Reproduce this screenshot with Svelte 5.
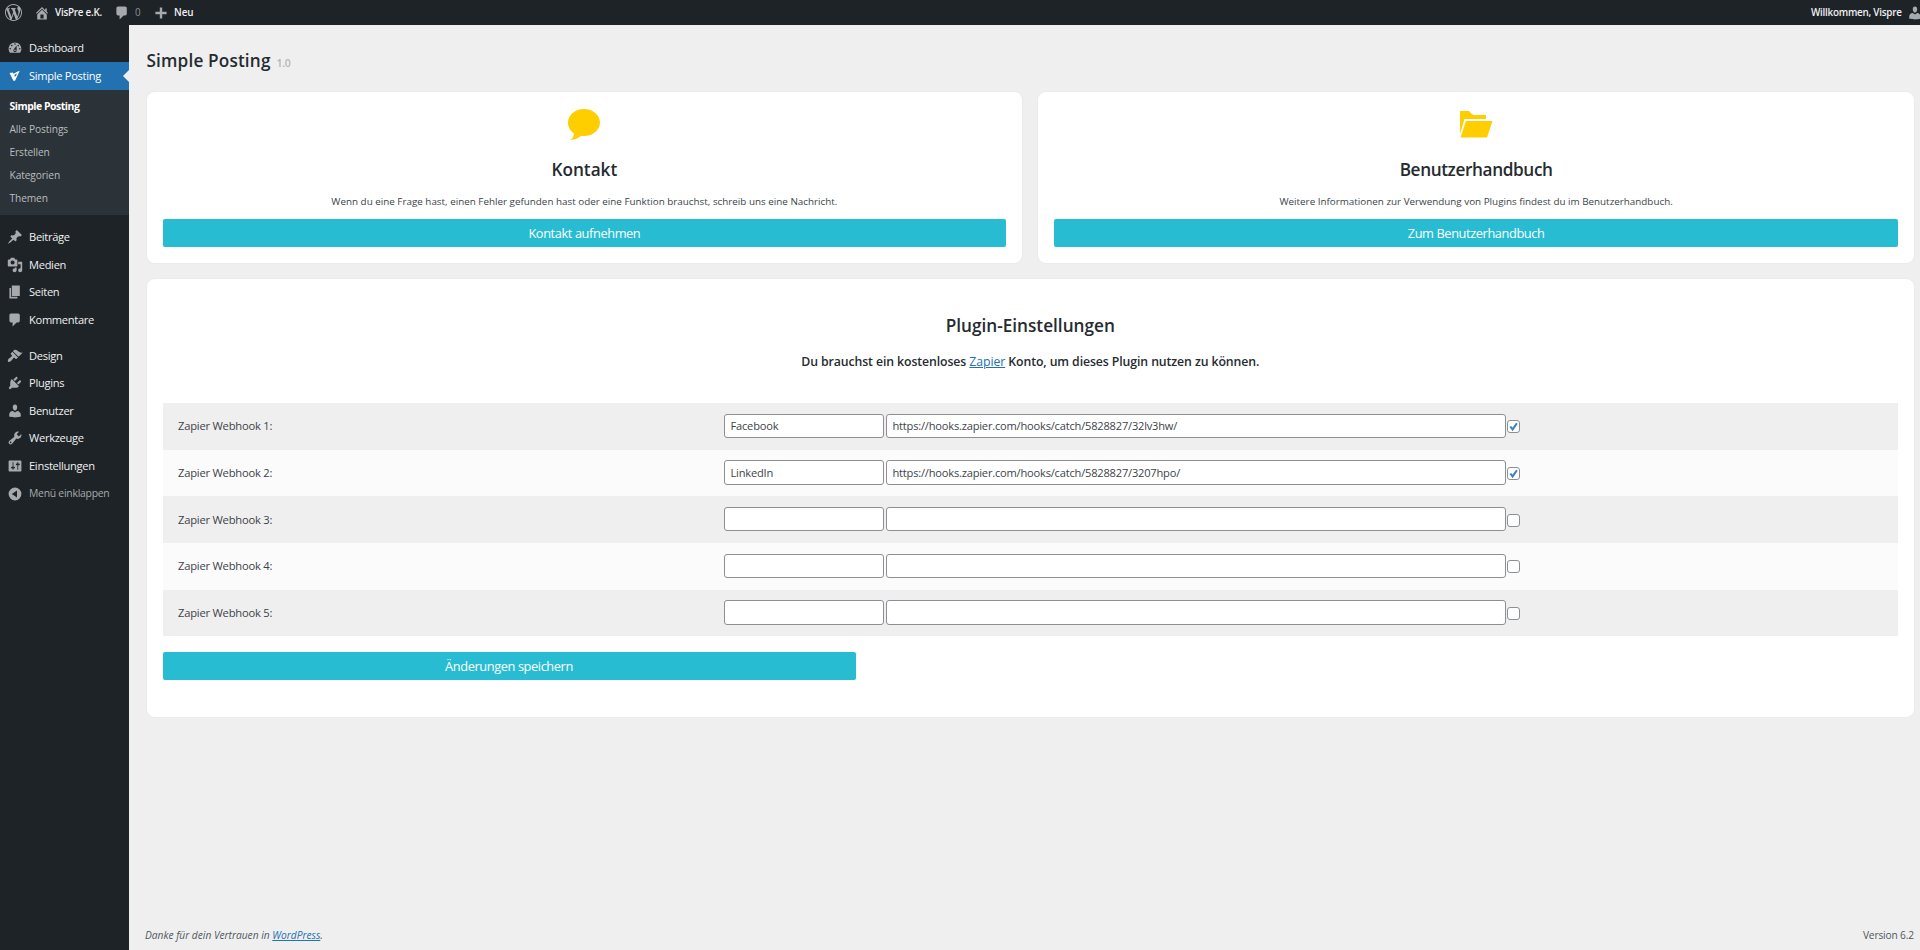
<script lang="ts">
  const icons: Record<string, string> = {
    wordpress: 'M20 10c0-5.51-4.49-10-10-10C4.48 0 0 4.49 0 10c0 5.52 4.48 10 10 10 5.51 0 10-4.48 10-10zM7.78 15.37L4.37 6.22c.55-.02 1.17-.08 1.17-.08.5-.06.44-1.13-.06-1.11 0 0-1.45.11-2.37.11-.18 0-.37 0-.58-.01C4.12 2.69 6.87 1.11 10 1.11c2.33 0 4.45.87 6.05 2.34-.68-.11-1.65.39-1.65 1.58 0 .74.45 1.36.9 2.1.35.61.55 1.36.55 2.46 0 1.49-1.4 5-1.4 5l-3.03-8.37c.54-.02.82-.17.82-.17.5-.05.44-1.25-.06-1.22 0 0-1.44.12-2.38.12-.87 0-2.33-.12-2.33-.12-.5-.03-.56 1.2-.06 1.22l.92.08 1.26 3.41zM17.41 10c.24-.64.74-1.87.43-4.25.7 1.29 1.05 2.71 1.05 4.25 0 3.29-1.73 6.24-4.4 7.78.97-2.59 1.94-5.2 2.92-7.78zM6.1 18.09C3.12 16.65 1.11 13.53 1.11 10c0-1.3.23-2.48.72-3.59C3.25 10.3 4.67 14.2 6.1 18.09zm4.03-6.63l2.58 6.98c-.86.29-1.76.45-2.71.45-.79 0-1.57-.11-2.29-.33.81-2.38 1.62-4.74 2.42-7.1z',
    home: 'M16 8.5l1.53 1.53-1.06 1.06L10 4.6l-6.47 6.49-1.06-1.06L10 2.5l4 4v-2h2v4zm-6-2.46l6 5.99V18H4v-5.97zM12 17v-5H8v5h4z',
    comments: 'M5 2h9c1.1 0 2 .9 2 2v7c0 1.1-.9 2-2 2h-2l-5 5v-5H5c-1.1 0-2-.9-2-2V4c0-1.1.9-2 2-2z',
    plus: 'M17 8.5v3h-5.5V17h-3v-5.5H3v-3h5.5V3h3v5.5z',
    dashboard: 'M3.76 16h12.48c1.1-1.37 1.76-3.11 1.76-5 0-4.42-3.58-8-8-8s-8 3.58-8 8c0 1.89.66 3.63 1.76 5zM10 4c.55 0 1 .45 1 1s-.45 1-1 1-1-.45-1-1 .45-1 1-1zM6 6c.55 0 1 .45 1 1s-.45 1-1 1-1-.45-1-1 .45-1 1-1zm8 0c.55 0 1 .45 1 1s-.45 1-1 1-1-.45-1-1 .45-1 1-1zm-5.37 5.55L12 7v6c0 1.1-.9 2-2 2s-2-.9-2-2c0-.57.24-1.08.63-1.45zM4 10c.55 0 1 .45 1 1s-.45 1-1 1-1-.45-1-1 .45-1 1-1zm12 0c.55 0 1 .45 1 1s-.45 1-1 1-1-.45-1-1 .45-1 1-1zm-5 3c0-.55-.45-1-1-1s-1 .45-1 1 .45 1 1 1 1-.45 1-1z',
    vispre: 'M1 5.500L6.500 4.500 8.500 7 15 3 19.500 1.500 11 19.500 8 19.500zM10 8.500v3.500l2.500-.5 2-5z',
    post: 'M10.44 3.02l1.82-1.82 6.36 6.35-1.83 1.82c-1.05-.68-2.48-.57-3.41.36l-.75.75c-.92.93-1.04 2.35-.35 3.41l-1.83 1.82-2.41-2.41-2.8 2.79c-.42.42-3.38 2.71-3.8 2.29s1.86-3.39 2.28-3.81l2.79-2.79L4.1 9.36l1.83-1.82c1.05.69 2.48.57 3.4-.36l.75-.75c.93-.92 1.05-2.35.36-3.41z',
    media: 'M13 11V4c0-.55-.45-1-1-1h-1.67L9 1H5L3.67 3H2c-.55 0-1 .45-1 1v7c0 .55.45 1 1 1h10c.55 0 1-.45 1-1zM7 4.5c1.38 0 2.5 1.12 2.5 2.5S8.38 9.5 7 9.5 4.5 8.38 4.5 7 5.62 4.5 7 4.5zM14 6h5v10.5c0 1.38-1.12 2.5-2.5 2.5S14 17.88 14 16.5s1.12-2.5 2.5-2.5c.17 0 .34.02.5.05V9h-3V6zm-4 8.05V13h2v3.5c0 1.38-1.12 2.5-2.5 2.5S7 17.88 7 16.5 8.12 14 9.5 14c.17 0 .34.02.5.05z',
    page: 'M6 15V2h10v13H6zm-1 1h8v2H3V5h2v11z',
    appearance: 'M14.48 11.06L7.41 3.99l1.5-1.5c.5-.56 2.3-.47 3.51.32 1.21.8 1.43 1.28 2.91 2.1 1.18.64 2.45 1.26 4.45.85zm-.71.71L6.7 4.7 4.93 6.47c-.39.39-.39 1.02 0 1.41l1.06 1.06c.39.39.39 1.03 0 1.42-.6.6-1.43 1.11-2.21 1.69-.35.26-.7.53-1.01.84C1.43 14.23.4 16.08 1.4 17.07c.99 1 2.84-.03 4.18-1.36.31-.31.58-.66.85-1.02.57-.78 1.08-1.61 1.69-2.21.39-.39 1.02-.39 1.41 0l1.06 1.06c.39.39 1.02.39 1.41 0z',
    plugins: 'M13.11 4.36L9.87 7.6 8 5.73l3.24-3.24c.35-.34 1.05-.2 1.56.32.52.51.66 1.21.31 1.55zm-8 1.77l.91-1.12 9.01 9.01-1.19.84c-.71.71-2.63 1.16-3.82 1.16H6.14L4.9 17.26c-.59.59-1.54.59-2.12 0-.59-.58-.59-1.53 0-2.12l1.24-1.24v-3.88c0-1.13.4-3.19 1.09-3.89zm7.26 3.97l3.24-3.24c.34-.35 1.04-.21 1.55.31.52.51.66 1.21.31 1.55l-3.24 3.25z',
    users: 'M10 9.25c-2.27 0-2.73-3.44-2.73-3.44C7 4.02 7.82 2 9.97 2c2.16 0 2.98 2.02 2.71 3.81 0 0-.41 3.44-2.68 3.44zm0 2.57L12.72 10c2.39 0 4.52 2.33 4.52 4.53v2.49s-3.65 1.13-7.24 1.13c-3.65 0-7.24-1.13-7.24-1.13v-2.49c0-2.25 1.94-4.48 4.47-4.48z',
    tools: 'M16.68 9.77c-1.34 1.34-3.3 1.67-4.95.99l-5.41 6.52c-.99.99-2.59.99-3.58 0s-.99-2.59 0-3.57l6.52-5.42c-.68-1.65-.35-3.61.99-4.95 1.28-1.28 3.12-1.62 4.72-1.06l-2.89 2.89 2.82 2.82 2.86-2.87c.53 1.58.18 3.39-1.08 4.65zM3.81 16.21c.4.39 1.04.39 1.43 0 .4-.4.4-1.04 0-1.43-.39-.4-1.03-.4-1.43 0-.39.39-.39 1.03 0 1.43z',
    settings: 'M18 16V4c0-.55-.45-1-1-1H3c-.55 0-1 .45-1 1v12c0 .55.45 1 1 1h14c.55 0 1-.45 1-1zM8 11h1c.55 0 1 .45 1 1s-.45 1-1 1H8v1.5c0 .28-.22.5-.5.5s-.5-.22-.5-.5V13H6c-.55 0-1-.45-1-1s.45-1 1-1h1V5.5c0-.28.22-.5.5-.5s.5.22.5.5V11zm5-2h-1c-.55 0-1-.45-1-1s.45-1 1-1h1V5.5c0-.28.22-.5.5-.5s.5.22.5.5V7h1c.55 0 1 .45 1 1s-.45 1-1 1h-1v5.5c0 .28-.22.5-.5.5s-.5-.22-.5-.5V9z',
    collapse: 'M10 2a8 8 0 100 16 8 8 0 000-16zM12.5 5.5v9L6 10z'
  };

  const submenu = ['Simple Posting', 'Alle Postings', 'Erstellen', 'Kategorien', 'Themen'];

  const contentMenu = [
    { icon: 'post', label: 'Beiträge' },
    { icon: 'media', label: 'Medien' },
    { icon: 'page', label: 'Seiten' },
    { icon: 'comments', label: 'Kommentare' }
  ];

  const adminMenu = [
    { icon: 'appearance', label: 'Design' },
    { icon: 'plugins', label: 'Plugins' },
    { icon: 'users', label: 'Benutzer' },
    { icon: 'tools', label: 'Werkzeuge' },
    { icon: 'settings', label: 'Einstellungen' }
  ];

  let webhooks = $state([
    { name: 'Facebook', url: 'https://hooks.zapier.com/hooks/catch/5828827/32lv3hw/', active: true },
    { name: 'LinkedIn', url: 'https://hooks.zapier.com/hooks/catch/5828827/3207hpo/', active: true },
    { name: '', url: '', active: false },
    { name: '', url: '', active: false },
    { name: '', url: '', active: false }
  ]);
</script>

{#snippet icon(name: string)}
  <svg class="icon" viewBox="0 0 20 20" fill="currentColor" fill-rule="evenodd"><path d={icons[name]} /></svg>
{/snippet}

{#snippet menuItem(item: { icon: string; label: string })}
  <li class="menu-item">
    <span class="menu-icon">{@render icon(item.icon)}</span>
    <span class="menu-label">{item.label}</span>
  </li>
{/snippet}

<div class="page">
  <header class="adminbar">
    <span class="bar-logo">{@render icon('wordpress')}</span>
    <span class="bar-item site">{@render icon('home')}<span>VisPre e.K.</span></span>
    <span class="bar-item count">{@render icon('comments')}<span class="muted">0</span></span>
    <span class="bar-item new">{@render icon('plus')}<span>Neu</span></span>
    <span class="bar-item account"><span>Willkommen, Vispre</span>{@render icon('users')}</span>
  </header>

  <div class="layout">
    <nav class="sidebar">
      <ul>
        {@render menuItem({ icon: 'dashboard', label: 'Dashboard' })}
        <li class="menu-item active">
          <span class="menu-icon">{@render icon('vispre')}</span>
          <span class="menu-label">Simple Posting</span>
        </li>
      </ul>
      <ul class="submenu">
        {#each submenu as label, i}
          <li class:current={i === 0}><span>{label}</span></li>
        {/each}
      </ul>
      <ul class="group">
        {#each contentMenu as item}
          {@render menuItem(item)}
        {/each}
      </ul>
      <ul class="group">
        {#each adminMenu as item}
          {@render menuItem(item)}
        {/each}
        <li class="menu-item collapse">
          <span class="menu-icon">{@render icon('collapse')}</span>
          <span class="menu-label">Menü einklappen</span>
        </li>
      </ul>
    </nav>

    <main class="content">
      <h1><span>Simple Posting</span> <small>1.0</small></h1>

      <div class="cards">
        <section class="card info">
          <svg class="card-icon" viewBox="0 0 32 32" fill="#ffce00">
            <path d="M16 1c8.800 0 16 6 16 13.500S25 28 16 28c-1 0-2-.1-3-.3C9.800 30.500 6.500 32 2 31.800c2.500-1.300 4-3.300 4-6.300C2.300 23 0 19 0 14.500 0 7 7.200 1 16 1z" />
          </svg>
          <h2>Kontakt</h2>
          <p>Wenn du eine Frage hast, einen Fehler gefunden hast oder eine Funktion brauchst, schreib uns eine Nachricht.</p>
          <button type="button" class="btn"><span>Kontakt aufnehmen</span></button>
        </section>
        <section class="card info">
          <svg class="card-icon" viewBox="0 0 32 32" fill="#ffce00">
            <path d="M0 3h9l4 4h13v4H4.500L0 26z" />
            <path d="M6 13h26.500L27 29.500H.5z" />
          </svg>
          <h2 class="tight">Benutzerhandbuch</h2>
          <p>Weitere Informationen zur Verwendung von Plugins findest du im Benutzerhandbuch.</p>
          <button type="button" class="btn"><span>Zum Benutzerhandbuch</span></button>
        </section>
      </div>

      <section class="card settings">
        <h2>Plugin-Einstellungen</h2>
        <h3>Du brauchst ein kostenloses <a href="#zapier">Zapier</a> Konto, um dieses Plugin nutzen zu können.</h3>
        <div class="webhooks">
          {#each webhooks as hook, i}
            <div class="webhook">
              <label for="hook-{i}">Zapier Webhook {i + 1}:</label>
              <input id="hook-{i}" class="name" type="text" bind:value={hook.name} />
              <input class="url" type="text" bind:value={hook.url} />
              <button
                type="button"
                class="check"
                aria-label="Webhook {i + 1}"
                onclick={() => (hook.active = !hook.active)}
              >
                {#if hook.active}
                  <svg viewBox="0 0 12 12" fill="none" stroke="#3582c4" stroke-width="2.200"><path d="M2.500 6l2.500 3.200L9.700 2.500" /></svg>
                {/if}
              </button>
            </div>
          {/each}
        </div>
        <button type="button" class="btn save"><span>Änderungen speichern</span></button>
      </section>

      <footer>
        <em>Danke für dein Vertrauen in <a href="#wordpress">WordPress</a>.</em>
        <span>Version 6.2</span>
      </footer>
    </main>
  </div>
</div>

<style>
  :global(body) {
    background: #efefef;
    overflow: hidden;
  }

  .page {
    height: 950px;
    display: flex;
    flex-direction: column;
    overflow: hidden;
    font-family: "Open Sans", "Noto Sans", sans-serif;
    font-size: 10.5px;
    color: #3c434a;
  }

  ul {
    list-style: none;
    margin: 0;
    padding: 0;
  }

  a {
    color: #2271b1;
  }

  .icon {
    display: block;
    flex: none;
    width: 16px;
    height: 16px;
  }

  /* Admin bar */
  .adminbar {
    display: flex;
    flex: none;
    align-items: center;
    height: 25px;
    padding-left: 5px;
    background: #1d2327;
    color: #a7aaad;
    font-size: 9.900px;
    font-weight: 600;
  }

  .bar-logo .icon {
    width: 17px;
    height: 17px;
  }

  .bar-item {
    display: flex;
    align-items: center;
    gap: 5px;
  }

  .bar-item span {
    color: #f0f0f1;
    line-height: 14px;
    margin-bottom: 1px;
    white-space: nowrap;
    letter-spacing: -0.25px;
  }

  .bar-item .muted {
    color: #8b8f94;
    font-weight: 400;
  }

  .site {
    width: 80px;
    margin-left: 12px;
  }

  .count {
    width: 39px;
  }

  .new span {
    letter-spacing: -0.1px;
  }

  .account {
    width: 109px;
    margin-left: auto;
  }

  .layout {
    display: flex;
    flex: 1;
    min-height: 0;
  }

  /* Sidebar */
  .sidebar {
    flex: none;
    width: 128.5px;
    padding-top: 9.5px;
    box-sizing: border-box;
    background: #1d2327;
    color: #f0f0f1;
    font-size: 11.100px;
  }

  .menu-item {
    position: relative;
    display: flex;
    align-items: center;
    height: 27.500px;
    letter-spacing: -0.29px;
    white-space: nowrap;
  }

  .menu-label {
    margin-bottom: 1px;
  }

  .menu-icon {
    display: flex;
    justify-content: center;
    width: 29px;
    color: #a7aaad;
  }

  .active {
    background: #2271b1;
    color: #fff;
  }

  .active .menu-icon {
    color: #fff;
  }

  .active .icon {
    width: 11px;
    height: 13px;
  }

  .active::after {
    content: "";
    position: absolute;
    right: 0;
    top: 7.500px;
    border: 6.400px solid transparent;
    border-left: 0;
    border-right-color: #efefef;
  }

  .submenu {
    padding: 5.500px 0;
    background: #2c3338;
    color: #b9bcbf;
    font-size: 10.200px;
    letter-spacing: -0.1px;
  }

  .submenu li {
    display: flex;
    align-items: center;
    height: 22.900px;
    padding-left: 9.500px;
  }

  .submenu .current {
    color: #fff;
    font-size: 10.400px;
    font-weight: 700;
    letter-spacing: -0.45px;
  }

  .group {
    padding-top: 8.600px;
  }

  .collapse {
    color: #a7aaad;
    font-size: 10.400px;
    letter-spacing: -0.25px;
  }

  .collapse .menu-label {
    margin-bottom: 0;
  }

  .collapse .menu-icon {
    padding-top: 1px;
  }

  /* Content */
  .content {
    display: flex;
    flex: 1;
    flex-direction: column;
    min-width: 0;
    padding: 0 6px 0 18px;
  }

  h1,
  h2,
  h3,
  p {
    margin: 0;
  }

  h1,
  h2 {
    color: #252b30;
    font-size: 17.200px;
    font-weight: 600;
    line-height: 24px;
    letter-spacing: 0;
  }

  h1 {
    display: flex;
    align-items: baseline;
    gap: 6px;
    height: 24px;
    margin: 24px 0 18.500px;
    letter-spacing: 0.15px;
  }

  h1 small {
    color: #b4b6b8;
    font-size: 10.500px;
    font-weight: 600;
    letter-spacing: -0.4px;
  }

  h2.tight {
    letter-spacing: -0.38px;
  }

  .cards {
    display: flex;
    gap: 16px;
  }

  .card {
    box-sizing: border-box;
    padding: 16px;
    border-radius: 8px;
    background: #fff;
    text-align: center;
    box-shadow: 0 0 1px 1px rgba(0, 0, 0, 0.02);
  }

  .info {
    display: flex;
    flex: 1;
    flex-direction: column;
    align-items: center;
    height: 171.500px;
  }

  .card-icon {
    width: 32px;
    height: 32px;
    overflow: visible;
  }

  .info h2 {
    margin-top: 18px;
  }

  .info p {
    margin-top: 12px;
    font-size: 9.850px;
    line-height: 14px;
  }

  .btn {
    width: 100%;
    height: 28.500px;
    padding: 0;
    border: 0;
    border-radius: 2px;
    background: #28bcd2;
    color: #fff;
    font: 12.800px "Open Sans", "Noto Sans", sans-serif;
    letter-spacing: -0.4px;
  }

  .info .btn {
    margin-top: 11.500px;
  }

  .settings {
    height: 438px;
    margin-top: 16px;
    padding-top: 34.500px;
  }

  .settings h3 {
    margin-top: 15px;
    color: #252b30;
    font-size: 12.300px;
    font-weight: 600;
    line-height: 18px;
    letter-spacing: -0.1px;
  }

  .settings h3 a {
    font-weight: 400;
  }

  .webhooks {
    margin-top: 32.500px;
  }

  .webhook {
    display: flex;
    align-items: center;
    height: 46.700px;
    padding-left: 15.500px;
    background: #fbfbfb;
  }

  .webhook:nth-child(odd) {
    background: #efefef;
  }

  .webhook label {
    width: 545.500px;
    margin-bottom: 1px;
    text-align: left;
    font-size: 11.200px;
    letter-spacing: -0.22px;
  }

  .webhook input {
    box-sizing: border-box;
    height: 24.500px;
    margin: 0 2px 1px 0;
    padding: 0 6px;
    border: 1px solid #8c8f94;
    border-radius: 3px;
    background: #fff;
    color: #3c434a;
    font: 11.100px "Open Sans", "Noto Sans", sans-serif;
    letter-spacing: -0.2px;
  }

  .webhook .name {
    width: 160px;
  }

  .webhook .url {
    width: 620px;
    margin-right: 1px;
  }

  .check {
    width: 13px;
    height: 13px;
    margin-top: 1px;
    padding: 0;
    border: 1px solid #8c8f94;
    border-radius: 3px;
    background: #fff;
  }

  .check svg {
    display: block;
    width: 11px;
    height: 11px;
  }

  .save {
    display: block;
    width: 693px;
    margin-top: 15.500px;
  }

  footer {
    display: flex;
    justify-content: space-between;
    margin: auto 0 7px -1.500px;
    color: #50575e;
    font-size: 10.200px;
    line-height: 16px;
  }

  footer span {
    letter-spacing: -0.15px;
  }
</style>
